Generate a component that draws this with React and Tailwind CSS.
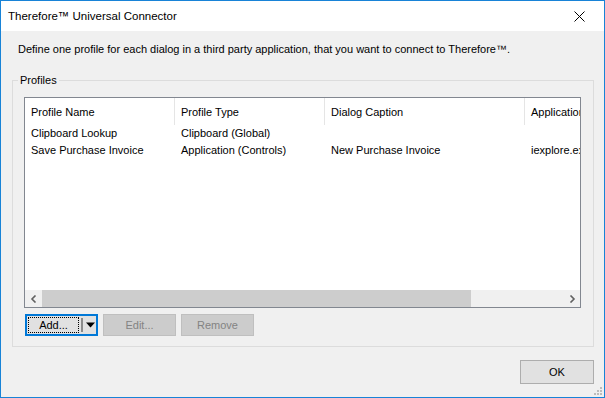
function ChevronLeft() {
  return (
    <svg width="8" height="8" viewBox="0 0 8 8">
      <path d="M5.5 0.5 L2 4 L5.5 7.5" fill="none" stroke="#606060" strokeWidth="1.6" />
    </svg>
  );
}
function ChevronRight() {
  return (
    <svg width="8" height="8" viewBox="0 0 8 8">
      <path d="M2.5 0.5 L6 4 L2.5 7.5" fill="none" stroke="#606060" strokeWidth="1.6" />
    </svg>
  );
}

const cols = ["w-[150px]", "w-[150px]", "w-[200px]", "w-[100px]"];

function Row({ cells }) {
  return (
    <div className="flex h-[17px] items-center whitespace-nowrap">
      {cells.map((c, i) => (
        <div key={i} className={cols[i] + " shrink-0 pl-[6px] overflow-hidden"}>
          {c}
        </div>
      ))}
    </div>
  );
}

export default function App() {
  return (
    <div className="w-[605px] h-[398px] border border-[#1883d7] flex flex-col bg-[#f0f0f0] relative overflow-hidden font-['Liberation_Sans',Arial,sans-serif] text-[11px] leading-[15px] text-black">
      {/* title bar */}
      <div className="h-[30px] bg-white flex items-center justify-between shrink-0">
        <div className="pl-[7px] text-[11.5px]">Therefore™ Universal Connector</div>
        <div className="w-[46px] h-[30px] flex items-center justify-center mr-[2px]">
          <svg width="11" height="11" viewBox="0 0 11 11">
            <path d="M0.5 0.5 L10.5 10.5 M10.5 0.5 L0.5 10.5" stroke="#000" strokeWidth="1" />
          </svg>
        </div>
      </div>

      {/* body */}
      <div className="flex-1 flex flex-col">
        <div className="mt-[11px] ml-[17px] whitespace-nowrap">
          Define one profile for each dialog in a third party application, that you want to connect to Therefore™.
        </div>

        <fieldset className="mt-[16px] ml-[11px] w-[582px] min-w-0 h-[274px] border border-[#dcdcdc] p-0 m-0">
          <legend className="ml-[5px] px-[2px] leading-[15px]">Profiles</legend>

          <div className="mt-[9px] ml-[11px] w-[557px] h-[211px] border border-[#828790] bg-white flex flex-col overflow-hidden">
            {/* header */}
            <div className="flex h-[27px] items-stretch whitespace-nowrap shrink-0">
              {["Profile Name", "Profile Type", "Dialog Caption", "Application"].map((h, i) => (
                <div
                  key={h}
                  className={cols[i] + " shrink-0 pl-[6px] pt-[1px] flex items-center overflow-hidden " + (i < 3 ? "border-r border-[#e5e5e5]" : "")}
                >
                  {h}
                </div>
              ))}
            </div>
            <Row cells={["Clipboard Lookup", "Clipboard (Global)", "", ""]} />
            <Row cells={["Save Purchase Invoice", "Application (Controls)", "New Purchase Invoice", "iexplore.exe"]} />
            <div className="flex-1" />
            {/* horizontal scrollbar */}
            <div className="h-[17px] flex shrink-0 bg-[#f0f0f0]">
              <div className="w-[17px] shrink-0 flex items-center justify-center">
                <ChevronLeft />
              </div>
              <div className="w-[429px] shrink-0 bg-[#cdcdcd]" />
              <div className="flex-1" />
              <div className="w-[17px] shrink-0 flex items-center justify-center">
                <ChevronRight />
              </div>
            </div>
          </div>

          {/* buttons */}
          <div className="mt-[6px] ml-[12px] flex gap-[5px]">
            <div className="w-[73px] h-[22px] border-2 border-[#0078d7] bg-[#e1e1e1] flex items-stretch">
              <div className="w-[55px] m-[1px] border border-dotted border-black flex items-center justify-center">
                Add...
              </div>
              <div className="flex items-center pl-[1px]">
                <div className="w-[2px] h-[14px] bg-[#8a8a8a]" />
                <svg width="11" height="6" viewBox="0 0 11 6" className="ml-[2px]">
                  <path d="M1 0.5 H10 L5.5 5.5 Z" fill="#000" />
                </svg>
              </div>
            </div>
            <div className="w-[73px] h-[22px] border border-[#bfbfbf] bg-[#cccccc] text-[#838383] flex items-center justify-center">
              Edit...
            </div>
            <div className="w-[73px] h-[22px] border border-[#bfbfbf] bg-[#cccccc] text-[#838383] flex items-center justify-center">
              Remove
            </div>
          </div>
        </fieldset>

        <div className="flex justify-end mr-[10px] mt-[13px]">
          <div className="w-[74px] h-[24px] border border-[#adadad] bg-[#e1e1e1] flex items-center justify-center">
            OK
          </div>
        </div>
      </div>

      {/* resize grip */}
      <svg width="10" height="10" viewBox="0 0 10 10" className="absolute right-[1px] bottom-[1px]">
        <rect x="7" y="1" width="2" height="2" fill="#bcbcbc" />
        <rect x="4" y="4" width="2" height="2" fill="#bcbcbc" />
        <rect x="7" y="4" width="2" height="2" fill="#bcbcbc" />
        <rect x="1" y="7" width="2" height="2" fill="#bcbcbc" />
        <rect x="4" y="7" width="2" height="2" fill="#bcbcbc" />
        <rect x="7" y="7" width="2" height="2" fill="#bcbcbc" />
      </svg>
    </div>
  );
}
